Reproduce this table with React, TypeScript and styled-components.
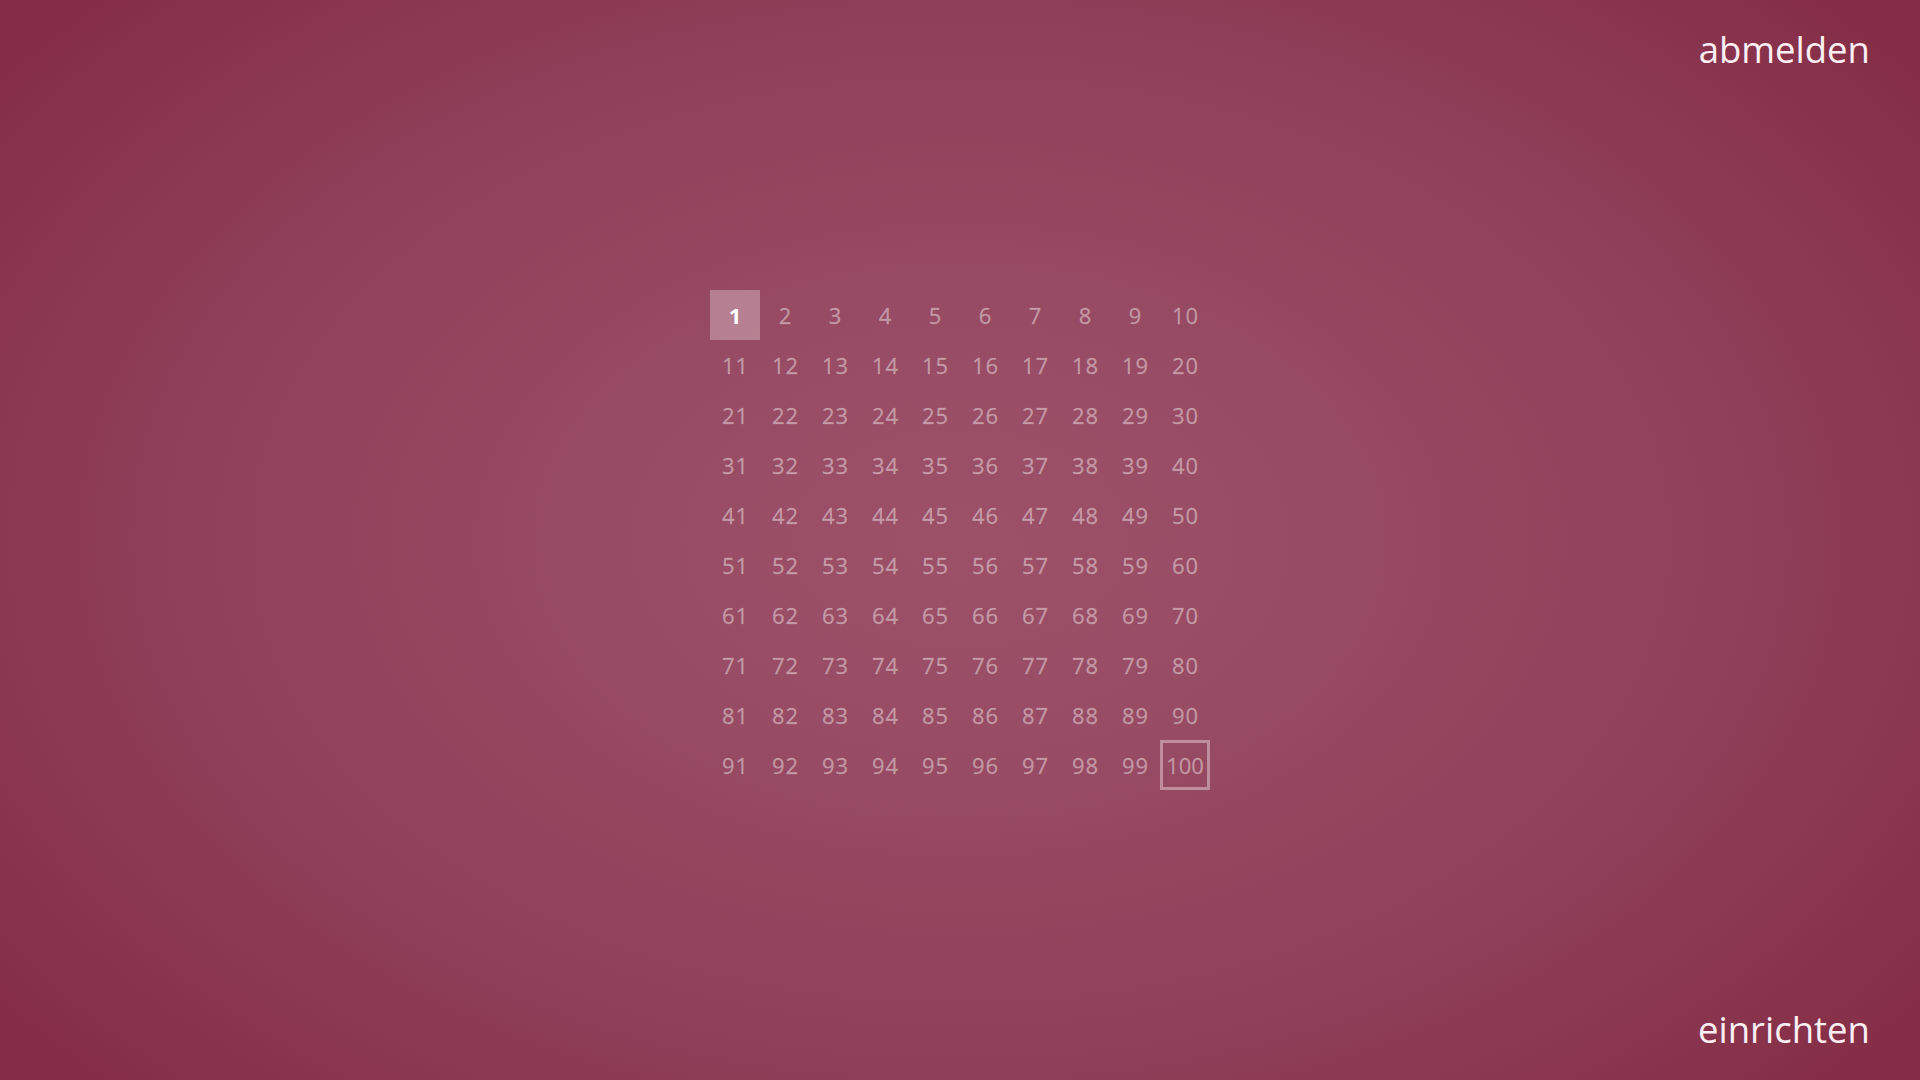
import React from "react";
import styled, { createGlobalStyle } from "styled-components";

const GlobalStyle = createGlobalStyle`
  html, body {
    margin: 0;
    padding: 0;
    width: 100%;
    height: 100%;
    overflow: hidden;
  }
  #root {
    width: 100%;
    height: 100%;
  }
`;

const Screen = styled.div`
  width: 1920px;
  height: 1080px;
  box-sizing: border-box;
  display: grid;
  grid-template-rows: auto 1fr auto;
  padding: 25px 50px 26px 50px;
  background: radial-gradient(
    ellipse 62% 72% at 50% 50%,
    #9c5169 0%,
    #984b64 30%,
    #8f405a 65%,
    #862e48 100%
  );
  font-family: "Open Sans", "Noto Sans", sans-serif;
  color: #fff;
`;

const TopBar = styled.div`
  display: flex;
  justify-content: flex-end;
`;

const BottomBar = styled.div`
  display: flex;
  justify-content: flex-end;
`;

const CornerLink = styled.a`
  font-size: 36.5px;
  line-height: 49px;
  color: #fbeff3;
  text-decoration: none;
  cursor: pointer;
`;

const Center = styled.div`
  display: flex;
  align-items: center;
  justify-content: center;
  margin-top: 1px;
`;

const Grid = styled.div`
  display: grid;
  grid-template-columns: repeat(10, 50px);
  grid-auto-rows: 50px;
`;

const Cell = styled.div<{ $active?: boolean; $framed?: boolean }>`
  box-sizing: border-box;
  display: flex;
  align-items: center;
  justify-content: center;
  font-size: 22px;
  letter-spacing: ${(p) => (p.$framed ? "0" : "1px")};
  padding-left: ${(p) => (p.$framed ? "0" : "1px")};
  color: ${(p) => (p.$active ? "#ffffff" : "rgba(255, 255, 255, 0.42)")};
  font-weight: ${(p) => (p.$active ? 700 : 500)};
  -webkit-text-stroke: ${(p) => (p.$active ? "0" : "0.3px rgba(255, 255, 255, 0.25)")};
  background: ${(p) => (p.$active ? "rgba(255, 255, 255, 0.3)" : "transparent")};
  border: ${(p) => (p.$framed ? "3px solid rgba(255, 255, 255, 0.38)" : "none")};
`;

const numbers = Array.from({ length: 100 }, (_, i) => i + 1);

export default function App() {
  return (
    <>
      <GlobalStyle />
      <Screen>
        <TopBar>
          <CornerLink>abmelden</CornerLink>
        </TopBar>
        <Center>
          <Grid>
            {numbers.map((n) => (
              <Cell key={n} $active={n === 1} $framed={n === 100}>
                {n}
              </Cell>
            ))}
          </Grid>
        </Center>
        <BottomBar>
          <CornerLink>einrichten</CornerLink>
        </BottomBar>
      </Screen>
    </>
  );
}
